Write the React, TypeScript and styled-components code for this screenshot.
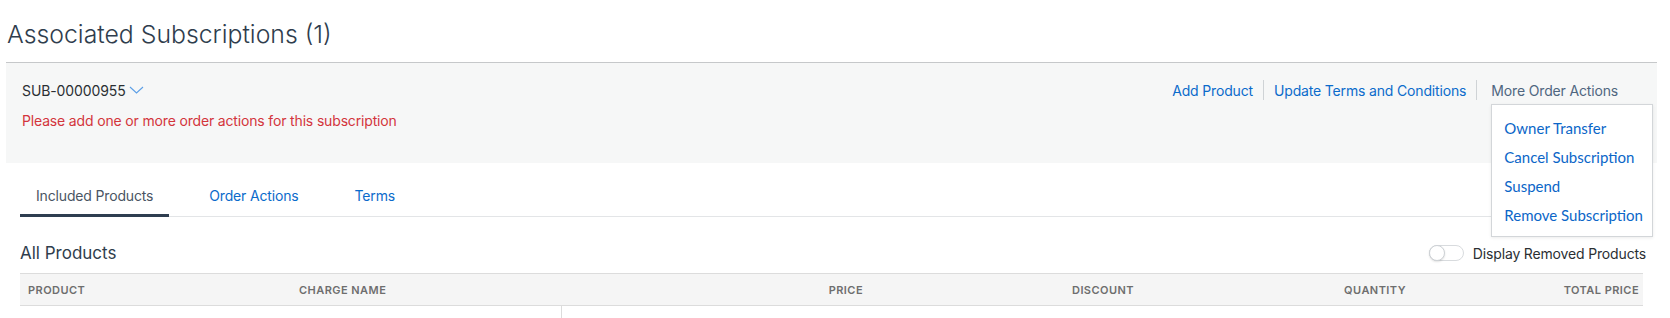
import React from "react";
import styled, { createGlobalStyle } from "styled-components";

const GlobalStyle = createGlobalStyle`
  html, body { margin: 0; padding: 0; background: #ffffff; }
  body { font-family: Inter, "Noto Sans", sans-serif; color: #333; }
  * { box-sizing: border-box; }
`;

const Page = styled.div`
  width: 1670px;
  height: 318px;
  overflow: hidden;
  position: relative;
`;

const Header = styled.div`
  margin-left: 6px;
  width: 1651px;
`;

const Title = styled.h1`
  margin: 0;
  height: 63px;
  padding: 19px 0 0 1px;
  font-size: 24.8px;
  line-height: 30px;
  font-weight: 300;
  color: #2f3d4d;
  border-bottom: 1px solid #c6c8ca;
`;

const Panel = styled.div`
  background: #f6f7f7;
  height: 100px;
  padding: 12px 39px 0 16px;
  display: flex;
  flex-direction: column;
  gap: 7px;
`;

const PanelRow = styled.div`
  display: flex;
  align-items: center;
  justify-content: space-between;
  height: 30px;
`;

const SubId = styled.div`
  display: flex;
  align-items: center;
  gap: 3px;
  font-size: 14px;
  letter-spacing: -0.1px;
  color: #2b2f33;
`;

const Warning = styled.div`
  font-size: 14px;
  letter-spacing: -0.16px;
  color: #d3353c;
  line-height: 18px;
`;

const Actions = styled.div`
  display: flex;
  align-items: center;
  height: 20px;
`;

const ActionLink = styled.a<{ $muted?: boolean }>`
  font-size: 14px;
  letter-spacing: -0.16px;
  color: ${(p) => (p.$muted ? "#4f6680" : "#0b6bcb")};
  text-decoration: none;
  padding: 0 ${(p) => (p.$muted ? "0" : "10px")} 0 10px;
  cursor: pointer;
  white-space: nowrap;
`;

const ActionSep = styled.span<{ $wide?: boolean }>`
  width: 1px;
  height: 20px;
  background: #cfd3d6;
  margin-right: ${(p) => (p.$wide ? "4px" : "0")};
`;

const MenuAnchor = styled.div`
  position: relative;
  display: flex;
  align-items: center;
`;

const Menu = styled.ul`
  position: absolute;
  top: 22px;
  left: 10px;
  width: 162px;
  height: 133px;
  margin: 0;
  padding: 9px 0 0 12px;
  list-style: none;
  background: #ffffff;
  border: 1px solid #d3d6d9;
  box-shadow: 0 1px 3px rgba(0, 0, 0, 0.08);
  z-index: 5;
`;

const MenuItem = styled.li`
  font-family: Lato, "Noto Sans", sans-serif;
  font-size: 15px;
  line-height: 29px;
  height: 29px;
  color: #0b66c8;
  white-space: nowrap;
`;

const TabSection = styled.div`
  margin: 13px 0 0 20px;
  width: 1623px;
`;

const TabBar = styled.div`
  display: flex;
  gap: 24px;
  border-bottom: 1px solid #e3e5e7;
  height: 41px;
`;

const Tab = styled.div<{ $active?: boolean }>`
  padding: 1px 16px 0;
  height: 41px;
  display: flex;
  align-items: center;
  font-size: 14px;
  letter-spacing: -0.16px;
  color: ${(p) => (p.$active ? "#4a5563" : "#0b6bcb")};
  border-bottom: 3px solid ${(p) => (p.$active ? "#2f3e50" : "transparent")};
  margin-bottom: -1px;
`;

const SectionRow = styled.div`
  display: flex;
  align-items: center;
  justify-content: space-between;
  height: 28px;
  margin: 22px -3px 6px 0;
`;

const SectionTitle = styled.h2`
  margin: 0;
  font-size: 17px;
  font-weight: 400;
  color: #2f3d4d;
`;

const ToggleLabel = styled.label`
  display: flex;
  align-items: center;
  gap: 9px;
  font-size: 14px;
  letter-spacing: -0.16px;
  color: #2b2f33;
`;

const Track = styled.span`
  position: relative;
  width: 35px;
  height: 16px;
  border-radius: 8px;
  border: 1px solid #d8dbde;
  background: #ffffff;
`;

const Knob = styled.span`
  position: absolute;
  left: -1px;
  top: -1px;
  width: 16px;
  height: 16px;
  border-radius: 50%;
  background: #ffffff;
  border: 1px solid #cdd1d5;
  box-shadow: 0 1px 2px rgba(0, 0, 0, 0.12);
`;

const Table = styled.div`
  width: 1623px;
`;

const HeadRow = styled.div`
  display: grid;
  grid-template-columns: 271px 271px 309px 271px 272px 229px;
  height: 33px;
  background: #f5f5f5;
  border-top: 1px solid #dcdcdc;
  border-bottom: 1px solid #dcdcdc;
  align-items: center;
`;

const HeadCell = styled.div<{ $right?: boolean; $last?: boolean }>`
  padding: 0 ${(p) => (p.$last ? "4px" : "8px")} 0 8px;
  font-size: 11px;
  font-weight: 600;
  letter-spacing: 0.45px;
  color: #6e6e6e;
  text-align: ${(p) => (p.$right ? "right" : "left")};
  text-transform: uppercase;
`;

const BodyRow = styled.div`
  display: grid;
  grid-template-columns: 271px 271px 1fr;
  height: 40px;
`;

const BodyCell = styled.div<{ $divider?: boolean }>`
  border-right: ${(p) => (p.$divider ? "1px solid #dcdcdc" : "none")};
`;

const Chevron = () => (
  <svg width="15" height="8" viewBox="0 0 15 8" fill="none">
    <path d="M1 1l6.5 6L14 1" stroke="#5c9fe6" strokeWidth="1.1" />
  </svg>
);

const columns: { label: string; right?: boolean }[] = [
  { label: "Product" },
  { label: "Charge Name" },
  { label: "Price", right: true },
  { label: "Discount", right: true },
  { label: "Quantity", right: true },
  { label: "Total Price", right: true },
];

export default function App() {
  return (
    <Page>
      <GlobalStyle />
      <Header>
        <Title>Associated Subscriptions (1)</Title>
        <Panel>
          <PanelRow>
            <SubId>
              SUB-00000955
              <Chevron />
            </SubId>
            <Actions>
              <ActionLink>Add Product</ActionLink>
              <ActionSep />
              <ActionLink>Update Terms and Conditions</ActionLink>
              <ActionSep $wide />
              <MenuAnchor>
                <ActionLink $muted>More Order Actions</ActionLink>
                <Menu>
                  <MenuItem>Owner Transfer</MenuItem>
                  <MenuItem>Cancel Subscription</MenuItem>
                  <MenuItem>Suspend</MenuItem>
                  <MenuItem>Remove Subscription</MenuItem>
                </Menu>
              </MenuAnchor>
            </Actions>
          </PanelRow>
          <Warning>Please add one or more order actions for this subscription</Warning>
        </Panel>
      </Header>
      <TabSection>
        <TabBar>
          <Tab $active>Included Products</Tab>
          <Tab>Order Actions</Tab>
          <Tab>Terms</Tab>
        </TabBar>
        <SectionRow>
          <SectionTitle>All Products</SectionTitle>
          <ToggleLabel>
            <Track>
              <Knob />
            </Track>
            Display Removed Products
          </ToggleLabel>
        </SectionRow>
        <Table>
          <HeadRow>
            {columns.map((c, i) => (
              <HeadCell key={c.label} $right={c.right} $last={i === columns.length - 1}>
                {c.label}
              </HeadCell>
            ))}
          </HeadRow>
          <BodyRow>
            <BodyCell />
            <BodyCell $divider />
            <BodyCell />
          </BodyRow>
        </Table>
      </TabSection>
    </Page>
  );
}
